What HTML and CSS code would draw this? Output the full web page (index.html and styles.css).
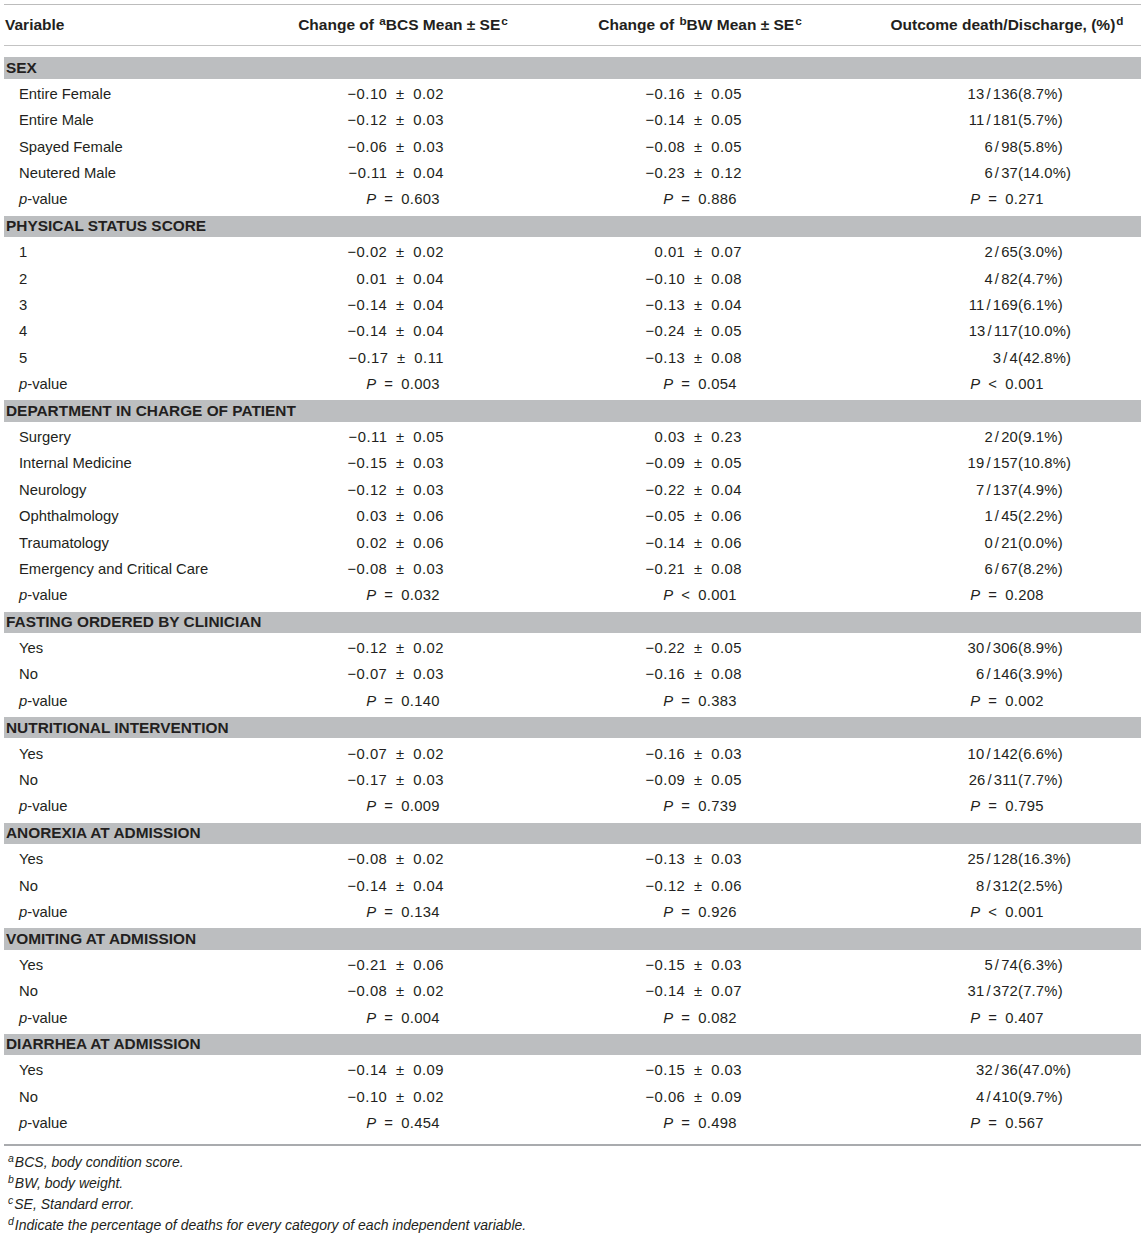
FILE: index.html
```html
<!DOCTYPE html>
<html lang="en">
<head>
<meta charset="utf-8">
<title>Table</title>
<link rel="stylesheet" href="styles.css">
</head>
<body>
<div class="wrap">
<table class="tbl">
<colgroup><col class="c1"><col class="c2"><col class="c3"><col class="c4"></colgroup>
<thead>
<tr>
<th class="var">Variable</th>
<th>Change of <sup>a</sup>BCS Mean ± SE<sup>c</sup></th>
<th>Change of <sup>b</sup>BW Mean ± SE<sup>c</sup></th>
<th>Outcome death/Discharge, (%)<sup>d</sup></th>
</tr>
</thead>
<tbody>
<tr class="sp"><td colspan="4"></td></tr>

<tr class="sec"><td colspan="4">SEX</td></tr>
<tr><td class="lab">Entire Female</td><td class="v v2">−0.10 ± 0.02</td><td class="v v3">−0.16 ± 0.05</td><td class="o"><span class="l">13<span class="sl">/</span>136</span><span class="r">(8.7%)</span></td></tr>
<tr><td class="lab">Entire Male</td><td class="v v2">−0.12 ± 0.03</td><td class="v v3">−0.14 ± 0.05</td><td class="o"><span class="l">11<span class="sl">/</span>181</span><span class="r">(5.7%)</span></td></tr>
<tr><td class="lab">Spayed Female</td><td class="v v2">−0.06 ± 0.03</td><td class="v v3">−0.08 ± 0.05</td><td class="o"><span class="l">6<span class="sl">/</span>98</span><span class="r">(5.8%)</span></td></tr>
<tr><td class="lab">Neutered Male</td><td class="v v2">−0.11 ± 0.04</td><td class="v v3">−0.23 ± 0.12</td><td class="o"><span class="l">6<span class="sl">/</span>37</span><span class="r">(14.0%)</span></td></tr>
<tr><td class="lab"><i>p</i>-value</td><td class="p"><i>P</i> = 0.603</td><td class="p"><i>P</i> = 0.886</td><td class="p"><i>P</i> = 0.271</td></tr>

<tr class="sec"><td colspan="4">PHYSICAL STATUS SCORE</td></tr>
<tr><td class="lab">1</td><td class="v v2">−0.02 ± 0.02</td><td class="v v3">0.01 ± 0.07</td><td class="o"><span class="l">2<span class="sl">/</span>65</span><span class="r">(3.0%)</span></td></tr>
<tr><td class="lab">2</td><td class="v v2">0.01 ± 0.04</td><td class="v v3">−0.10 ± 0.08</td><td class="o"><span class="l">4<span class="sl">/</span>82</span><span class="r">(4.7%)</span></td></tr>
<tr><td class="lab">3</td><td class="v v2">−0.14 ± 0.04</td><td class="v v3">−0.13 ± 0.04</td><td class="o"><span class="l">11<span class="sl">/</span>169</span><span class="r">(6.1%)</span></td></tr>
<tr><td class="lab">4</td><td class="v v2">−0.14 ± 0.04</td><td class="v v3">−0.24 ± 0.05</td><td class="o"><span class="l">13<span class="sl">/</span>117</span><span class="r">(10.0%)</span></td></tr>
<tr><td class="lab">5</td><td class="v v2">−0.17 ± 0.11</td><td class="v v3">−0.13 ± 0.08</td><td class="o"><span class="l">3<span class="sl">/</span>4</span><span class="r">(42.8%)</span></td></tr>
<tr><td class="lab"><i>p</i>-value</td><td class="p"><i>P</i> = 0.003</td><td class="p"><i>P</i> = 0.054</td><td class="p"><i>P</i> &lt; 0.001</td></tr>

<tr class="sec"><td colspan="4">DEPARTMENT IN CHARGE OF PATIENT</td></tr>
<tr><td class="lab">Surgery</td><td class="v v2">−0.11 ± 0.05</td><td class="v v3">0.03 ± 0.23</td><td class="o"><span class="l">2<span class="sl">/</span>20</span><span class="r">(9.1%)</span></td></tr>
<tr><td class="lab">Internal Medicine</td><td class="v v2">−0.15 ± 0.03</td><td class="v v3">−0.09 ± 0.05</td><td class="o"><span class="l">19<span class="sl">/</span>157</span><span class="r">(10.8%)</span></td></tr>
<tr><td class="lab">Neurology</td><td class="v v2">−0.12 ± 0.03</td><td class="v v3">−0.22 ± 0.04</td><td class="o"><span class="l">7<span class="sl">/</span>137</span><span class="r">(4.9%)</span></td></tr>
<tr><td class="lab">Ophthalmology</td><td class="v v2">0.03 ± 0.06</td><td class="v v3">−0.05 ± 0.06</td><td class="o"><span class="l">1<span class="sl">/</span>45</span><span class="r">(2.2%)</span></td></tr>
<tr><td class="lab">Traumatology</td><td class="v v2">0.02 ± 0.06</td><td class="v v3">−0.14 ± 0.06</td><td class="o"><span class="l">0<span class="sl">/</span>21</span><span class="r">(0.0%)</span></td></tr>
<tr><td class="lab">Emergency and Critical Care</td><td class="v v2">−0.08 ± 0.03</td><td class="v v3">−0.21 ± 0.08</td><td class="o"><span class="l">6<span class="sl">/</span>67</span><span class="r">(8.2%)</span></td></tr>
<tr><td class="lab"><i>p</i>-value</td><td class="p"><i>P</i> = 0.032</td><td class="p"><i>P</i> &lt; 0.001</td><td class="p"><i>P</i> = 0.208</td></tr>

<tr class="sec"><td colspan="4">FASTING ORDERED BY CLINICIAN</td></tr>
<tr><td class="lab">Yes</td><td class="v v2">−0.12 ± 0.02</td><td class="v v3">−0.22 ± 0.05</td><td class="o"><span class="l">30<span class="sl">/</span>306</span><span class="r">(8.9%)</span></td></tr>
<tr><td class="lab">No</td><td class="v v2">−0.07 ± 0.03</td><td class="v v3">−0.16 ± 0.08</td><td class="o"><span class="l">6<span class="sl">/</span>146</span><span class="r">(3.9%)</span></td></tr>
<tr><td class="lab"><i>p</i>-value</td><td class="p"><i>P</i> = 0.140</td><td class="p"><i>P</i> = 0.383</td><td class="p"><i>P</i> = 0.002</td></tr>

<tr class="sec"><td colspan="4">NUTRITIONAL INTERVENTION</td></tr>
<tr><td class="lab">Yes</td><td class="v v2">−0.07 ± 0.02</td><td class="v v3">−0.16 ± 0.03</td><td class="o"><span class="l">10<span class="sl">/</span>142</span><span class="r">(6.6%)</span></td></tr>
<tr><td class="lab">No</td><td class="v v2">−0.17 ± 0.03</td><td class="v v3">−0.09 ± 0.05</td><td class="o"><span class="l">26<span class="sl">/</span>311</span><span class="r">(7.7%)</span></td></tr>
<tr><td class="lab"><i>p</i>-value</td><td class="p"><i>P</i> = 0.009</td><td class="p"><i>P</i> = 0.739</td><td class="p"><i>P</i> = 0.795</td></tr>

<tr class="sec"><td colspan="4">ANOREXIA AT ADMISSION</td></tr>
<tr><td class="lab">Yes</td><td class="v v2">−0.08 ± 0.02</td><td class="v v3">−0.13 ± 0.03</td><td class="o"><span class="l">25<span class="sl">/</span>128</span><span class="r">(16.3%)</span></td></tr>
<tr><td class="lab">No</td><td class="v v2">−0.14 ± 0.04</td><td class="v v3">−0.12 ± 0.06</td><td class="o"><span class="l">8<span class="sl">/</span>312</span><span class="r">(2.5%)</span></td></tr>
<tr><td class="lab"><i>p</i>-value</td><td class="p"><i>P</i> = 0.134</td><td class="p"><i>P</i> = 0.926</td><td class="p"><i>P</i> &lt; 0.001</td></tr>

<tr class="sec"><td colspan="4">VOMITING AT ADMISSION</td></tr>
<tr><td class="lab">Yes</td><td class="v v2">−0.21 ± 0.06</td><td class="v v3">−0.15 ± 0.03</td><td class="o"><span class="l">5<span class="sl">/</span>74</span><span class="r">(6.3%)</span></td></tr>
<tr><td class="lab">No</td><td class="v v2">−0.08 ± 0.02</td><td class="v v3">−0.14 ± 0.07</td><td class="o"><span class="l">31<span class="sl">/</span>372</span><span class="r">(7.7%)</span></td></tr>
<tr><td class="lab"><i>p</i>-value</td><td class="p"><i>P</i> = 0.004</td><td class="p"><i>P</i> = 0.082</td><td class="p"><i>P</i> = 0.407</td></tr>

<tr class="sec"><td colspan="4">DIARRHEA AT ADMISSION</td></tr>
<tr><td class="lab">Yes</td><td class="v v2">−0.14 ± 0.09</td><td class="v v3">−0.15 ± 0.03</td><td class="o"><span class="l">32<span class="sl">/</span>36</span><span class="r">(47.0%)</span></td></tr>
<tr><td class="lab">No</td><td class="v v2">−0.10 ± 0.02</td><td class="v v3">−0.06 ± 0.09</td><td class="o"><span class="l">4<span class="sl">/</span>410</span><span class="r">(9.7%)</span></td></tr>
<tr><td class="lab"><i>p</i>-value</td><td class="p"><i>P</i> = 0.454</td><td class="p"><i>P</i> = 0.498</td><td class="p"><i>P</i> = 0.567</td></tr>

<tr class="sp sp-end"><td colspan="4"></td></tr>
</tbody>
</table>

<div class="notes">
<p><sup>a</sup>BCS, body condition score.</p>
<p><sup>b</sup>BW, body weight.</p>
<p><sup>c</sup>SE, Standard error.</p>
<p><sup>d</sup>Indicate the percentage of deaths for every category of each independent variable.</p>
</div>
</div>
</body>
</html>
```

FILE: styles.css
```css
html, body {
  margin: 0;
  padding: 0;
  background: #ffffff;
}

body {
  font-family: "Liberation Sans", Arial, Helvetica, sans-serif;
  color: #231f20;
}

.wrap {
  padding: 4px 4px 0 4px;
}

.tbl {
  width: 1137px;
  table-layout: fixed;
  border-collapse: separate;
  border-spacing: 0;
  border-top: 1px solid #bcbcbc;
  border-bottom: 2px solid #a9abae;
}

.c1 { width: 275px; }
.c2 { width: 248px; }
.c3 { width: 346px; }
.c4 { width: 268px; }

.tbl th {
  height: 40px;
  padding: 0;
  font-size: 15.5px;
  font-weight: bold;
  text-align: center;
  vertical-align: middle;
  white-space: nowrap;
  border-bottom: 1px solid #c3c3c3;
}

.tbl th.var {
  text-align: left;
  padding-left: 1px;
}

.tbl sup {
  font-size: 0.76em;
  line-height: 0;
  vertical-align: 0.45em;
  margin-left: 1px;
}

.tbl tbody tr {
  height: 26.4px;
}

.tbl tbody tr.sp {
  height: 8.3px;
}

.tbl tbody tr.sp-end {
  height: 7.3px;
}

.tbl td {
  padding: 0;
  font-size: 14.8px;
  vertical-align: middle;
  white-space: nowrap;
}

.tbl tr.sp td {
  font-size: 0;
  line-height: 0;
}

.tbl td.lab {
  padding-left: 15px;
}

.tbl tr.sec td {
  background: #bcbec0;
  background-clip: padding-box;
  border-top: 3px solid #ffffff;
  border-bottom: 2px solid #ffffff;
  font-size: 15.4px;
  font-weight: bold;
  padding-left: 2px;
}

.tbl td.v {
  text-align: right;
  letter-spacing: 0.5px;
  word-spacing: 4px;
}

.tbl td.v2 { padding-right: 83px; }
.tbl td.v3 { padding-right: 131px; }

.tbl td.p {
  text-align: center;
  letter-spacing: 0.3px;
  word-spacing: 3.5px;
}

.o .l {
  display: inline-block;
  width: 145px;
  text-align: right;
  letter-spacing: 0.2px;
}

.o .r {
  display: inline-block;
  letter-spacing: 0.2px;
}

.sl {
  margin: 0 2px;
}

.notes {
  padding: 6px 0 0 4px;
  font-size: 14px;
  font-style: italic;
  line-height: 21px;
}

.notes p {
  margin: 0;
}

.notes sup {
  font-size: 0.75em;
  line-height: 0;
  vertical-align: 0.4em;
  margin-right: 1px;
}
```
